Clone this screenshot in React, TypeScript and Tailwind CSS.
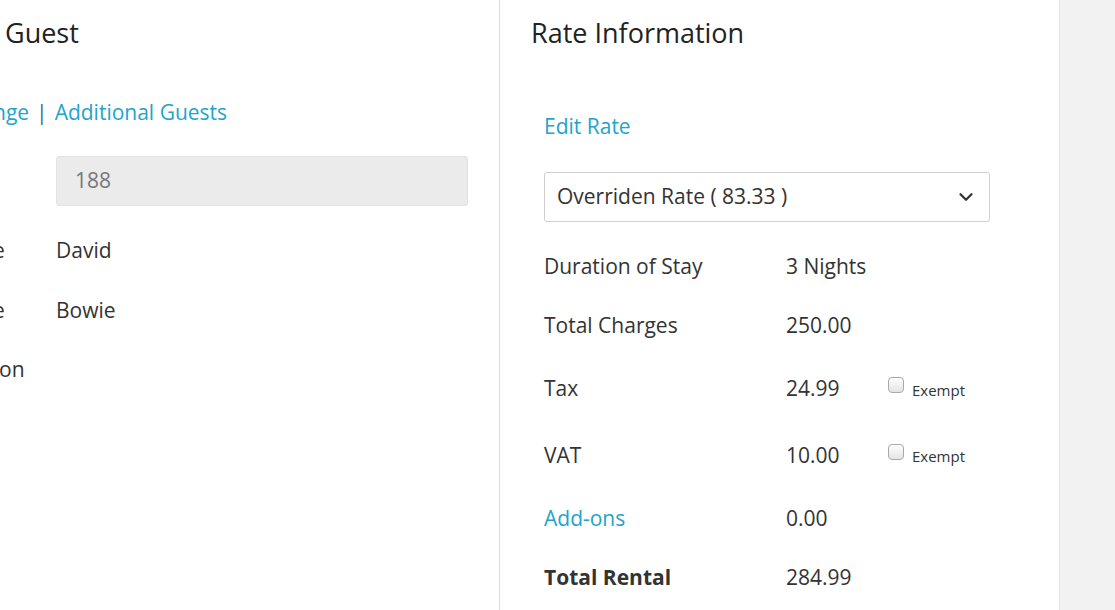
import { ChevronDown } from "lucide-react";

const Row = ({
	label,
	value,
	h,
	children,
}: {
	label: React.ReactNode;
	value: string;
	h: string;
	children?: React.ReactNode;
}) => {
	return (
		<div className={`flex items-center ${h}`}>
			<div className="w-[242px]">{label}</div>
			<div className="w-[102px]">{value}</div>
			{children}
		</div>
	);
};

const Exempt = () => {
	return (
		<label className="flex items-center gap-2 -mt-[8px]">
			<span className="w-4 h-4 rounded-[4px] border border-[#a9a9a9] bg-gradient-to-b from-[#fdfdfd] to-[#e4e4e4]" />
			<span className="text-[15px] text-[#333] mt-[10px]">Exempt</span>
		</label>
	);
};

const App = () => {
	return (
		<div className="flex h-[610px] w-[1115px] overflow-hidden bg-white text-[21px] text-[#333] font-['Open_Sans',sans-serif]">
			{/* guest panel, cut off at the left */}
			<div className="w-[500px] shrink-0 border-r border-[#dcdcdc] pr-[31px]">
				<h2 className="mt-[15px] pl-[5px] text-[27px] leading-[36px] text-[#222]">Guest</h2>
				<div className="mt-[46px] flex items-center leading-[30px] -ml-[7px]">
					<span className="text-[#21a4cd]">nge</span>
					<span className="mx-[7px] text-[#2f6e9b]">|</span>
					<span className="text-[#21a4cd]">Additional Guests</span>
				</div>
				<div className="mt-[29px] flex items-center">
					<div className="w-[56px]" />
					<div className="flex-1 h-[50px] rounded-[3px] bg-[#ebebeb] border border-[#e2e2e2] flex items-center pl-[18px] text-[#777]">
						188
					</div>
				</div>
				<div className="mt-[15px] flex items-center h-[60px]">
					<div className="w-[56px] overflow-hidden">
						<span className="block -ml-[7px]">e</span>
					</div>
					<span>David</span>
				</div>
				<div className="flex items-center h-[59px]">
					<div className="w-[56px] overflow-hidden">
						<span className="block -ml-[7px]">e</span>
					</div>
					<span>Bowie</span>
				</div>
				<div className="flex items-center h-[60px]">
					<div className="w-[56px] overflow-hidden">
						<span className="block -ml-[1px]">on</span>
					</div>
				</div>
			</div>

			{/* rate panel */}
			<div className="w-[560px] shrink-0 border-r border-[#e3e3e3] pl-[31px]">
				<h2 className="mt-[15px] text-[27px] leading-[36px] text-[#222]">Rate Information</h2>
				<div className="pl-[13px] pr-[69px]">
					<div className="mt-[60px] leading-[30px] text-[#21a4cd]">Edit Rate</div>
					<div className="mt-[31px] h-[50px] rounded-[3px] border border-[#cfcfcf] flex items-center justify-between pl-[12px] pr-[12px]">
						<span>Overriden Rate ( 83.33 )</span>
						<ChevronDown className="w-[22px] h-[22px] text-[#333]" strokeWidth={2.5} />
					</div>
					<div className="mt-[15px]">
						<Row label="Duration of Stay" value="3 Nights" h="h-[59px]" />
						<Row label="Total Charges" value="250.00" h="h-[60px]" />
						<Row label="Tax" value="24.99" h="h-[66px]">
							<Exempt />
						</Row>
						<Row label="VAT" value="10.00" h="h-[67px]">
							<Exempt />
						</Row>
						<Row label={<span className="text-[#21a4cd]">Add-ons</span>} value="0.00" h="h-[59px]" />
						<Row label={<span className="font-bold">Total Rental</span>} value="284.99" h="h-[60px]" />
					</div>
				</div>
			</div>

			<div className="flex-1 bg-[#f2f2f2]" />
		</div>
	);
};

export default App;
